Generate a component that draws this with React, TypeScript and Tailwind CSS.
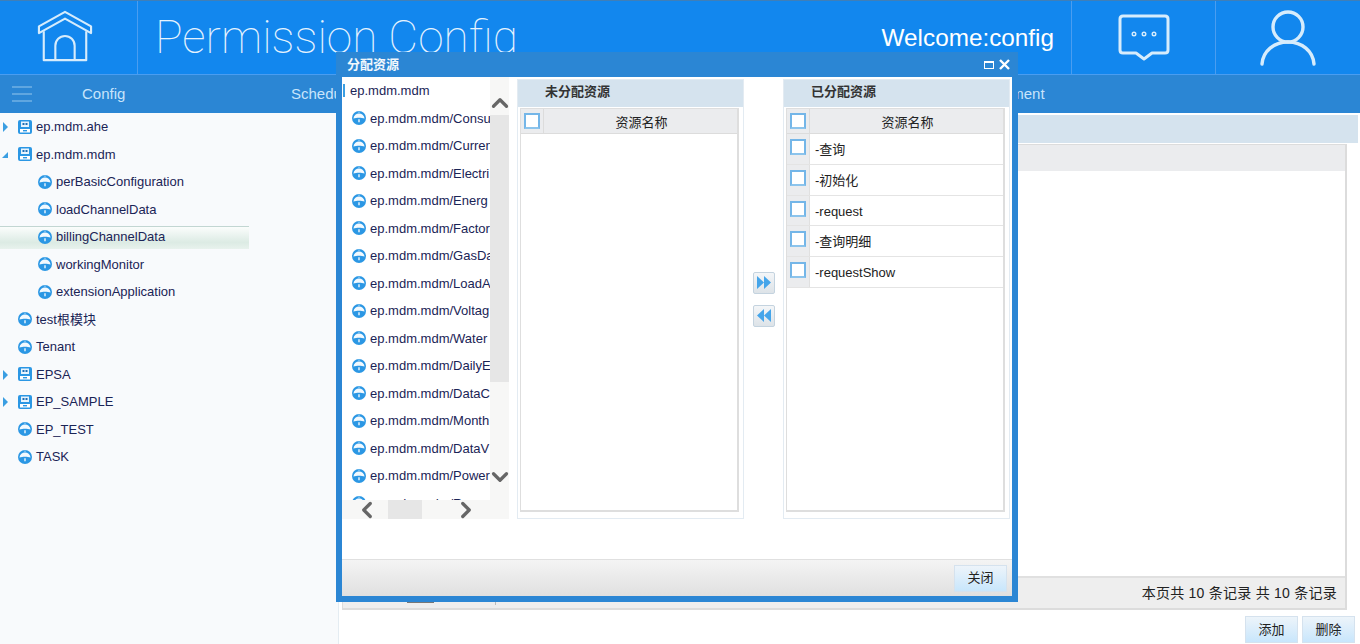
import React from 'react';
import { ChevronUp, ChevronDown, ChevronLeft, ChevronRight } from 'lucide-react';

const sans = "font-['Liberation_Sans','Noto_Sans_CJK_SC',sans-serif]";

const GaugeIcon: React.FC = () => (
  <svg width="14" height="14" viewBox="0 0 14 14" className="shrink-0 relative">
    <circle cx="7" cy="7" r="7" fill="#2b97e4" />
    <path d="M1.4 7.6C2 4.4 4.2 2.6 7 2.6C9.8 2.6 12 4.4 12.6 7.6C11 6.9 9 6.8 7 6.8C5 6.8 3 6.9 1.4 7.6Z" fill="#f2f9fe" />
    <path d="M7 8.2v3" stroke="#fff" strokeWidth="1.3" />
    <circle cx="7" cy="1.2" r="0.9" fill="#7cc3f2" />
  </svg>
);

const ModuleIcon: React.FC = () => (
  <svg width="14" height="14" viewBox="0 0 14 14" className="shrink-0">
    <rect width="14" height="14" rx="2" fill="#2b97e4" />
    <rect x="3" y="1.5" width="8" height="5.5" fill="#e8f4fd" />
    <rect x="4.5" y="3" width="2" height="2" fill="#1f6fb5" />
    <rect x="7.5" y="3" width="2" height="2" fill="#1f6fb5" />
    <rect x="2" y="9" width="10" height="3.5" fill="#fff" />
    <rect x="5" y="10" width="4" height="1.4" fill="#2b97e4" />
  </svg>
);

const treeRows = [
  { label: 'ep.mdm.ahe', level: 0, kind: 'module', arrow: 'right' },
  { label: 'ep.mdm.mdm', level: 0, kind: 'module', arrow: 'down' },
  { label: 'perBasicConfiguration', level: 1, kind: 'gauge' },
  { label: 'loadChannelData', level: 1, kind: 'gauge' },
  { label: 'billingChannelData', level: 1, kind: 'gauge', selected: true },
  { label: 'workingMonitor', level: 1, kind: 'gauge' },
  { label: 'extensionApplication', level: 1, kind: 'gauge' },
  { label: 'test根模块', level: 0, kind: 'gauge' },
  { label: 'Tenant', level: 0, kind: 'gauge' },
  { label: 'EPSA', level: 0, kind: 'module', arrow: 'right' },
  { label: 'EP_SAMPLE', level: 0, kind: 'module', arrow: 'right' },
  { label: 'EP_TEST', level: 0, kind: 'gauge' },
  { label: 'TASK', level: 0, kind: 'gauge' },
];

const resourceTree = [
  'Consu', 'Curren', 'Electri', 'Energ', 'Factor', 'GasDa', 'LoadA',
  'Voltag', 'Water', 'DailyE', 'DataC', 'Month', 'DataV', 'Power', 'Repo',
];

const assigned = ['-查询', '-初始化', '-request', '-查询明细', '-requestShow'];

const CheckBox: React.FC = () => (
  <span className="block w-4 h-4 bg-white border-2 border-[#74b6e8] border-b-[#8cc4ec]" />
);

const GradButton: React.FC<{ label: string }> = ({ label }) => (
  <button className="w-[53px] h-[27px] text-[13px] text-[#222] border border-[#d5e2ee] bg-gradient-to-b from-[#edf4fa] to-[#c8e6fc]">
    {label}
  </button>
);

const GridHead: React.FC = () => (
  <div className="flex h-[25px] shrink-0 bg-[#ebecee] border-b border-[#dcdcdc]">
    <div className="w-[23px] flex items-center justify-center border-r border-[#dcdcdc]">
      <CheckBox />
    </div>
    <div className="flex-1 pl-[2px] text-center text-[13px] leading-[27px] text-[#222]">资源名称</div>
  </div>
);

const ResourcePanel: React.FC<{ title: string; rows: string[] }> = ({ title, rows }) => (
  <div className="w-[227px] h-[440px] border border-[#e3ebf2] flex flex-col bg-white">
    <div className="h-[27px] shrink-0 bg-[#d5e3ee] pl-[27px] text-[13px] leading-[23px] font-bold text-[#333]">{title}</div>
    <div className="ml-[2px] mt-[1px] w-[219px] h-[404px] border border-[#dedede] border-r-2 border-b-2 flex flex-col">
      <GridHead />
      {rows.map((r) => (
        <div key={r} className="flex h-[30.75px] shrink-0 border-b border-[#e4e4e4]">
          <div className="w-[23px] bg-[#ebecee] border-r border-[#e0e0e0] pl-[3px] pt-[5px]">
            <CheckBox />
          </div>
          <div className="pl-[5px] text-[13px] leading-[31px] text-[#222]">{r}</div>
        </div>
      ))}
    </div>
  </div>
);

const ArrowButton: React.FC<{ flip?: boolean }> = ({ flip }) => (
  <button className="w-[22px] h-[22px] rounded-[2px] border border-[#c4d3df] bg-gradient-to-b from-[#f4f6f8] to-[#dde3e8] flex items-center justify-center">
    <svg width="14" height="13" viewBox="0 0 14 13" className={flip ? 'rotate-180' : ''}>
      <path d="M0 0L7 6.5L0 13Z M7 0L14 6.5L7 13Z" fill="#45a5ea" />
    </svg>
  </button>
);

const App: React.FC = () => {
  return (
    <div className={`relative w-[1360px] h-[644px] overflow-hidden bg-white ${sans}`}>
      {/* top header */}
      <header className="flex h-[75px] bg-[#1287ee] border-t border-[#3f7fb8] border-b border-b-[#4a9df0]">
        <div className="w-[138px] shrink-0 border-r border-[#4a9df0] flex items-center justify-center pr-[7px] pb-[4px]">
          <svg width="56" height="54" viewBox="0 0 58 54" fill="none" stroke="#d6ecfc" strokeWidth="2.2" strokeLinejoin="round">
            <path d="M2 24V17L29 2L56 17V24L29 9Z" />
            <path d="M7 22V52H51V22" />
            <path d="M19 52V37A10 10 0 0 1 39 37V52" />
          </svg>
        </div>
        <div className="flex-1 flex justify-between">
          <div className="pl-[17px] text-[46px] leading-[72px] font-thin text-[#e6f3fe] font-['Roboto',sans-serif]">
            Permission Config
          </div>
          <div className="pr-[17px] pt-[20px] text-[24.3px] leading-[34px] text-white">Welcome:config</div>
        </div>
        <div className="w-[144px] shrink-0 border-l border-[#4a9df0] flex items-center justify-center pl-[1px]">
          <svg width="52" height="50" viewBox="0 0 52 50" fill="none" stroke="#d6ecfc" strokeWidth="3" strokeLinejoin="round">
            <path d="M5 3H47Q50 3 50 6V37Q50 40 47 40H34L26 46L18 40H5Q2 40 2 37V6Q2 3 5 3Z" />
            <circle cx="16" cy="21" r="1.8" strokeWidth="1.4" />
            <circle cx="26" cy="21" r="1.8" strokeWidth="1.4" />
            <circle cx="36" cy="21" r="1.8" strokeWidth="1.4" />
          </svg>
        </div>
        <div className="w-[145px] shrink-0 border-l border-[#4a9df0] flex items-center justify-center">
          <svg width="56" height="58" viewBox="0 0 56 58" fill="none" stroke="#d6ecfc" strokeWidth="3.4" strokeLinecap="round">
            <circle cx="28" cy="18" r="15" />
            <path d="M2 55C3 42 14 33 28 33C42 33 53 42 54 55" />
          </svg>
        </div>
      </header>

      {/* menu bar */}
      <nav className="flex h-[38px] bg-[#2b86d4] text-[15px] leading-[38px] text-[#c8e4fb]">
        <div className="w-[44px] flex flex-col justify-center items-center gap-[5px]">
          <span className="block w-[20px] h-[2px] bg-[#5fa6e0]" />
          <span className="block w-[20px] h-[2px] bg-[#5fa6e0]" />
          <span className="block w-[20px] h-[2px] bg-[#5fa6e0]" />
        </div>
        <div className="w-[247px] pl-[38px]">Config</div>
        <div className="w-[500px]">Schedule</div>
        <div className="ml-[166px] w-[80px] text-right">Management</div>
      </nav>

      <div className="flex h-[531px]">
        {/* left tree */}
        <aside className="w-[339px] shrink-0 bg-[#f8fafc] border-r border-[#e4ecf2]">
          {treeRows.map((row) => (
            <div
              key={row.label}
              className={`relative flex items-center h-[27.5px] text-[13px] text-[#1a2456] ${
                row.level === 1 ? 'pl-[38px]' : 'pl-[18px]'
              }`}
            >
              {row.selected && (
                <span className="absolute left-0 top-[3px] w-[249px] h-[23px] border-t border-[#c2d6d2] bg-gradient-to-b from-[#fbfdfc] via-[#dcebe4] via-70% to-[#e8f2ed]" />
              )}
              {row.arrow === 'right' && (
                <span className="absolute left-[3px] top-[9px] w-0 h-0 border-y-[5px] border-y-transparent border-l-[5px] border-l-[#3a9ee2]" />
              )}
              {row.arrow === 'down' && (
                <span className="absolute left-[2px] top-[11px] w-0 h-0 border-b-[6px] border-b-[#3a9ee2] border-l-[6px] border-l-transparent" />
              )}
              {row.kind === 'module' ? <ModuleIcon /> : <GaugeIcon />}
              <span className="relative pl-[4px]">{row.label}</span>
            </div>
          ))}
        </aside>

        {/* content behind dialog */}
        <main className="flex-1 pt-[2px] flex flex-col">
          <div className="h-[28px] mr-[2px] bg-[#d5e3ee]" />
          <div className="ml-[3px] mr-[13px] mt-[1px] h-[466px] border border-[#dcdcdc] border-r-2 border-b-2 flex flex-col">
            <div className="h-[26px] bg-[#ebecee]" />
            <div className="flex-1" />
            <div className="h-[32px] bg-[#eeeeee] border-t-2 border-[#e0e0e0] flex justify-between pr-[8px] text-[14px] leading-[31px] tracking-[0.25px] text-[#222]">
              <div className="flex items-start">
                <span className="block ml-[64px] mt-[23px] w-[27px] h-[2px] bg-[#777]" />
                <span className="block ml-[61px] mt-[23px] w-px h-[4px] bg-[#bbb]" />
              </div>
              <span>本页共 10 条记录 共 10 条记录</span>
            </div>
          </div>
          <div className="flex justify-end gap-[4px] pr-[5px] pt-[6px]">
            <GradButton label="添加" />
            <GradButton label="删除" />
          </div>
        </main>
      </div>

      {/* dialog */}
      <section className="absolute left-[336px] top-[52px] w-[682px] h-[550px] bg-[#2b86d4] px-[6px] pb-[6px] flex flex-col">
        <div className="h-[25px] shrink-0 flex items-center justify-between text-[13px] font-bold text-[#f2f8fd]">
          <span className="pl-[5px]">分配资源</span>
          <span className="flex items-center gap-[5px] pr-[2px]">
            <span className="block w-[10px] h-[8px] border border-white border-t-2" />
            <svg width="11" height="11" viewBox="0 0 11 11" stroke="#fff" strokeWidth="2.4">
              <path d="M1 1L10 10M10 1L1 10" />
            </svg>
          </span>
        </div>
        <div className="h-[483px] shrink-0 bg-white border-b border-[#e0e0e0] flex items-start">
          {/* resource tree */}
          <div className="w-[167px] h-[442px] shrink-0 flex flex-col">
            <div className="flex h-[423px]">
              <div className="w-[148px] overflow-hidden text-[13px] text-[#1a2456] whitespace-nowrap">
                <div className="flex items-center h-[27.5px] pl-[8px] relative">
                  <span className="absolute left-[1px] top-[7px] w-[2px] h-[13px] bg-[#3a9ee2]" />
                  ep.mdm.mdm
                </div>
                {resourceTree.map((n) => (
                  <div key={n} className="flex items-center h-[27.5px] pl-[10px] gap-[4px]">
                    <GaugeIcon />
                    <span>ep.mdm.mdm/{n}</span>
                  </div>
                ))}
              </div>
              <div className="w-[19px] bg-[#f7f7f6] flex flex-col">
                <div className="h-[38px] flex justify-center overflow-visible pt-[13px]">
                  <ChevronUp size={26} strokeWidth={3} color="#666" className="shrink-0" />
                </div>
                <div className="h-[267px] bg-[#e6e6e6]" />
                <div className="flex-1 flex items-end justify-center pb-[10px]">
                  <ChevronDown size={26} strokeWidth={3} color="#666" className="shrink-0" />
                </div>
              </div>
            </div>
            <div className="h-[19px] bg-[#f7f7f6] flex items-center">
              <ChevronLeft size={26} strokeWidth={3} color="#666" className="ml-[12px] shrink-0" />
              <span className="block ml-[8px] w-[34px] h-[19px] bg-[#e6e6e6]" />
              <ChevronRight size={26} strokeWidth={3} color="#666" className="ml-[31px] shrink-0" />
            </div>
          </div>
          <div className="ml-[8px] mt-[2px] flex">
            <ResourcePanel title="未分配资源" rows={[]} />
            <div className="w-[39px] h-[440px] flex flex-col items-center justify-center gap-[11px] pl-[1px]">
              <ArrowButton />
              <ArrowButton flip />
            </div>
            <ResourcePanel title="已分配资源" rows={assigned} />
          </div>
        </div>
        <div className="flex-1 bg-gradient-to-b from-[#f4f4f4] to-[#e0e0e0] flex justify-end items-center pr-[5px]">
          <GradButton label="关闭" />
        </div>
      </section>
    </div>
  );
};

export default App;
